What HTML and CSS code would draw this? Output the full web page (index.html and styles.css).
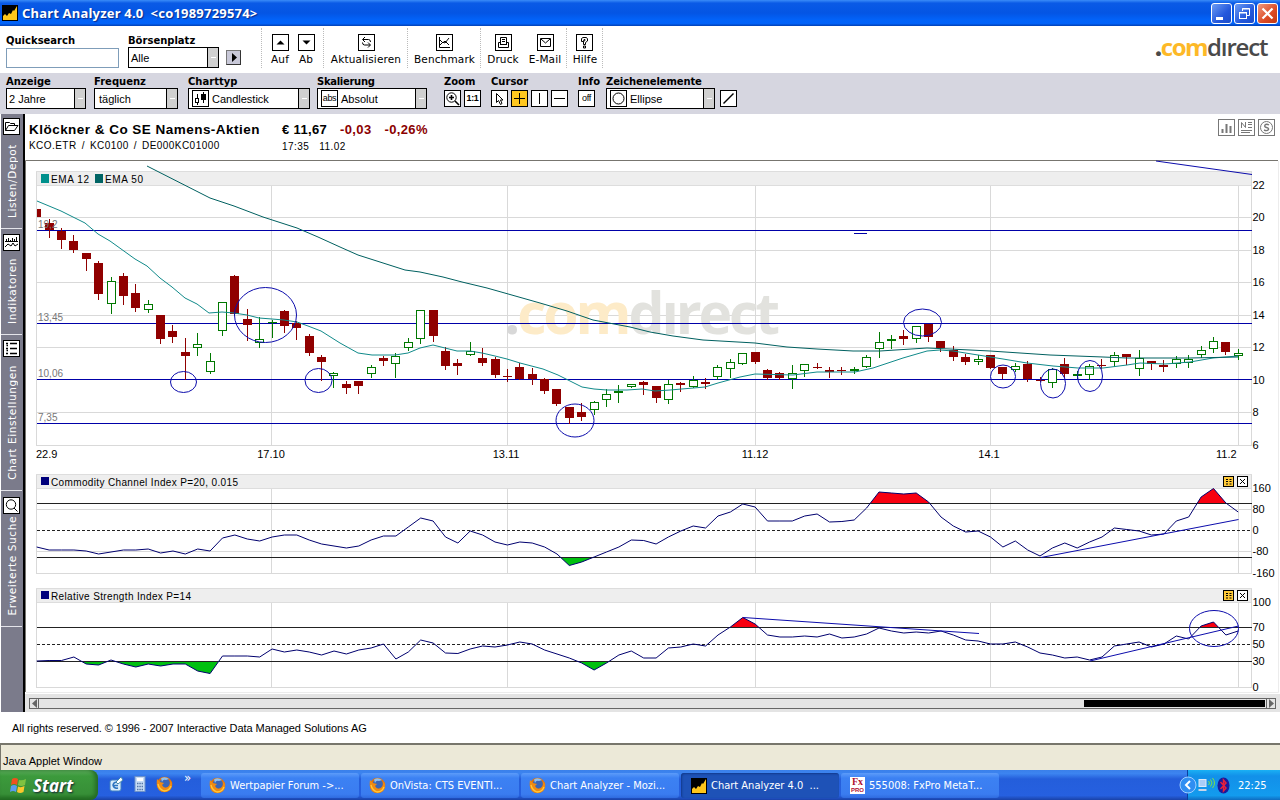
FILE: index.html
```html
<!DOCTYPE html>
<html lang="de">
<head>
    <meta charset="UTF-8">
    <title>Chart Analyzer 4.0</title>
    <link rel="stylesheet" href="styles.css">
</head>
<body>

    <!-- Shared symbols -->
    <svg class="defs" width="0" height="0">
        <symbol id="fox" viewBox="0 0 17 17">
            <circle cx="8.5" cy="8.5" r="7.8" fill="#e0730c"/>
            <circle cx="8.8" cy="7" r="5" fill="#3a66b8"/>
            <path d="M5 2.5Q9 0 13 3L10 4Q7 3 6 6Z" fill="#8fc0ee"/>
            <path d="M1 3L4 6L8 7L6 9Q8 13 12 11Q15 9 14 4Q18 9 14 14Q8 18 3 14Q0 10 1 3Z" fill="#f08a12"/>
            <path d="M2 8Q3 13 8 15Q13 15 15 10" fill="none" stroke="#ffc93c" stroke-width="1.3"/>
        </symbol>
        <symbol id="analyzer" viewBox="0 0 16 16">
            <rect width="16" height="16" fill="#000"/>
            <path d="M1 15V11L3 9L5 11L7 8L9 9L11 5L12 6L15 1V15Z" fill="#ffc61a"/>
        </symbol>
    </svg>

    <!-- Title bar -->
    <div class="titlebar">
        <svg class="app-icon" width="16" height="16"><use href="#analyzer"/></svg>
        <span class="title">Chart Analyzer 4.0  &lt;co1989729574&gt;</span>
        <div class="win-buttons">
            <span class="win"><svg width="19" height="19"><rect x="4" y="13" width="7" height="3" fill="#fff"/></svg></span>
            <span class="win"><svg width="19" height="19" fill="none" stroke="#fff"><path d="M7.500 7V4.500H14.500V11.500H12M7 5H15" /><rect x="4.500" y="8.500" width="7" height="6"/><path d="M4 9H12"/></svg></span>
            <span class="win close"><svg width="19" height="19"><path d="M4.500 4.500L14.500 14.500M14.500 4.500L4.500 14.500" stroke="#fff" stroke-width="2.200"/></svg></span>
        </div>
    </div>

    <!-- Main toolbar -->
    <div class="toolbar">
        <div class="field">
            <label>Quicksearch</label>
            <div class="search"></div>
        </div>
        <div class="field">
            <label>Börsenplatz</label>
            <div class="select exchange"><span>Alle</span><i></i></div>
        </div>
        <div class="go"><svg width="13" height="13"><path d="M5 2V11L10 6.500Z"/></svg></div>
        <div class="group narrow">
            <div class="tool"><svg class="ic" viewBox="1 1 15 15"><path class="f" d="M4.500 10.500H12.500L8.500 6.500Z"/></svg>Auf</div>
            <div class="tool"><svg class="ic" viewBox="1 1 15 15"><path class="f" d="M4.500 6.500H12.500L8.500 10.500Z"/></svg>Ab</div>
        </div>
        <div class="group">
            <div class="tool"><svg class="ic" viewBox="1 1 15 15"><path d="M7 3L4.500 5.500L7 8M5 5.500H10.500Q12.500 5.500 12.500 8M10 8.500L12.500 11L10 13.500M12 11H6.500Q4.500 11 4.500 8.500"/></svg>Aktualisieren</div>
        </div>
        <div class="group">
            <div class="tool"><svg class="ic" viewBox="1 1 15 15"><path d="M3.500 3V13.500H14M4 6L7 9L9 7L13 11M4 11L7 8L9 9L13 4"/></svg>Benchmark</div>
        </div>
        <div class="group wide">
            <div class="tool"><svg class="ic" viewBox="1 1 15 15"><path d="M5.500 10V3.500H11.500V10M7 5.500H10M7 7.500H10M5.500 8.500H3.500V13.500H13.500V8.500H11.500M5 10.500H12"/></svg>Druck</div>
            <div class="tool"><svg class="ic" viewBox="1 1 15 15"><path d="M3.500 4.500H13.500V12.500H3.500ZM4 5L8.500 9L13 5"/></svg>E-Mail</div>
        </div>
        <div class="group">
            <div class="tool"><svg class="ic" viewBox="1 1 15 15"><path d="M5.500 7.500V4.500L7 3.500H10.500L11.500 5V7L9.500 8.500V10.500H7.500V7.500L9 6.500V5.500H8L7.500 7.500ZM7.500 12H9.500V14H7.500Z"/></svg>Hilfe</div>
        </div>
        <div class="group"></div>
        <div class="logo"><b>.</b><em>com</em>dırect</div>
    </div>

    <!-- Chart options -->
    <div class="options">
        <div class="field"><label>Anzeige</label><div class="select w80"><span>2 Jahre</span><i></i></div></div>
        <div class="field"><label>Frequenz</label><div class="select w84 indent"><span>täglich</span><i></i></div></div>
        <div class="field"><label>Charttyp</label><div class="select w122">
            <svg class="ic" viewBox="1 1 15 15"><rect x="3.500" y="8.500" width="3" height="4"/><path d="M5.500 4V8M5.500 12V15M11.500 2V13"/><rect class="f" x="9" y="4" width="5" height="6"/></svg>
            <span>Candlestick</span><i></i></div></div>
        <div class="field"><label class="tight">Skalierung</label><div class="select w110">
            <b class="ic txt">abs</b><span>Absolut</span><i></i></div></div>
        <div class="field"><label>Zoom</label><div class="icons">
            <svg class="ic" viewBox="1 1 15 15"><circle cx="7.500" cy="7.500" r="4.700"/><path d="M11 11L15 15M5 7.500H10M7.500 5V10" stroke-width="1.600"/></svg>
            <b class="ic txt ratio">1:1</b></div></div>
        <div class="field"><label>Cursor</label><div class="icons">
            <svg class="ic" viewBox="1 1 15 15"><path d="M5.500 3.500V12.500L7.500 10.500L9.500 14.500L11 13.500L9.500 10H12Z"/></svg>
            <svg class="ic active" viewBox="1 1 15 15"><path d="M3 8.500H14M8.500 3V14"/></svg>
            <svg class="ic" viewBox="1 1 15 15"><path d="M8.500 3V14"/></svg>
            <svg class="ic" viewBox="1 1 15 15"><path d="M3 8.500H14"/></svg></div></div>
        <div class="field"><label>Info</label><div class="icons"><b class="ic txt">off</b></div></div>
        <div class="field"><label class="draw">Zeichenelemente</label><div class="select w109">
            <svg class="ic" viewBox="1 1 15 15"><circle cx="8.500" cy="8.500" r="5.500"/></svg>
            <span>Ellipse</span><i></i></div></div>
        <div class="field"><label>&nbsp;</label><div class="icons"><svg class="ic" viewBox="1 1 15 15"><path d="M3.500 13.500L13.500 3.500" stroke-width="1.400"/></svg></div></div>
    </div>

    <div class="workspace">
        <!-- Vertical tabs -->
        <div class="sidebar">
            <div class="tab t1"><svg class="ic" viewBox="1 1 15 15"><path d="M2.500 12.500V4.500H6.500L7.500 5.500H11.500V7.500M2.500 12.500L5.500 7.500H15L11.500 12.500Z"/></svg><span>Listen/Depot</span></div>
            <div class="tab t2"><svg class="ic" viewBox="1 1 15 15"><path d="M2 7.500H15M3.500 5V7M5.500 4V7M7.500 6V7M9.500 4V7M11.500 5V7M13.500 3V7M2 13L5 10L8 12L10 9L12 12L15 10"/></svg><span>Indikatoren</span></div>
            <div class="tab t3"><svg class="ic" viewBox="1 1 15 15"><path d="M7 3.500H14M7 8.500H14M7 13.500H14M3 3.500H5M3 8.500H5M3 13.500H5M3.500 5.500H5M3.500 10.500H5" stroke-width="1.300"/></svg><span>Chart Einstellungen</span></div>
            <div class="tab t4"><svg class="ic" viewBox="1 1 15 15"><circle cx="8" cy="7.500" r="4.700"/><path d="M11 11L14.500 14.500"/></svg><span>Erweiterte Suche</span></div>
        </div>

        <div class="content">
            <div class="quote">
                <div class="name">
                    <h1>Klöckner &amp; Co SE Namens-Aktien</h1>
                    <p>KCO.ETR / KC0100 / DE000KC01000</p>
                </div>
                <div class="price">
                    <div><strong>€ 11,67</strong><strong class="neg">-0,03</strong><strong class="neg">-0,26%</strong></div>
                    <p>17:35&nbsp; 11.02</p>
                </div>
                <div class="quote-icons">
                    <svg class="ic gray" viewBox="1 1 15 15"><path d="M4.500 14V10M8.500 14V5M12.500 14V7" stroke-width="2"/></svg>
                    <svg class="ic gray" viewBox="1 1 15 15"><path d="M3.500 9V3.500L7.500 8.500V3M10 3.500H14M10 5.500H14M10 8.500H14M3 11.500H14M3 13.500H12"/></svg>
                    <svg class="ic gray" viewBox="1 1 15 15"><circle cx="8.500" cy="8.500" r="6"/><path d="M11 6Q8.500 4.500 7 6Q6 8 8.500 8.500Q11 9 10.500 10.500Q9 12.500 6 11" stroke-width="1.400"/></svg>
                </div>
            </div>

            <!-- All three panes share one drawing, units are window pixels -->
            <svg class="chart" viewBox="25 160 1255 534" width="1255" height="534">
                <defs>
                    <clipPath id="plot"><rect x="37" y="161" width="1215" height="285"/></clipPath>
                    <clipPath id="cciHigh"><rect x="37" y="480" width="1202" height="23.500"/></clipPath>
                    <clipPath id="cciLow"><rect x="37" y="557.500" width="1202" height="16"/></clipPath>
                    <clipPath id="rsiHigh"><rect x="37" y="600" width="1202" height="27.500"/></clipPath>
                    <clipPath id="rsiLow"><rect x="37" y="661.500" width="1202" height="26"/></clipPath>
                </defs>
                <path class="frame" d="M25.500 692V160.500H1278"/>
                <path class="frame-light" d="M1278.500 161V692.500H26"/>
                <g id="grid" class="grid"></g>
                <text class="watermark" x="504" y="334" textLength="276"><tspan fill="#d8d8d8">.</tspan><tspan fill="#fdebc8">com</tspan><tspan fill="#e2e2de">dırect</tspan></text>
                <g class="level">
                    <path d="M37 230.500H1252M37 323.500H1252M37 379.500H1252M37 423.500H1252M854 233.500H867"/>
                </g>
                <g id="candles" clip-path="url(#plot)"></g>
                <polyline id="ema12" class="ema12"/>
                <polyline id="ema50" class="ema50"/>
                <g class="drawn">
                    <ellipse cx="265.500" cy="315" rx="31" ry="27.500"/>
                    <ellipse cx="183.500" cy="382" rx="13" ry="10.500"/>
                    <ellipse cx="318.500" cy="380.500" rx="13.500" ry="12"/>
                    <ellipse cx="575" cy="420.500" rx="19" ry="16.500"/>
                    <ellipse cx="922.500" cy="322.500" rx="19" ry="13.500"/>
                    <ellipse cx="1003" cy="376.500" rx="12.500" ry="11.500"/>
                    <ellipse cx="1053" cy="383.500" rx="12.500" ry="14.500"/>
                    <ellipse cx="1090" cy="376" rx="12.500" ry="15.500"/>
                    <path d="M1156 161L1252 174.500"/>
                </g>
                <rect x="41" y="174" width="8" height="9" fill="#00908c"/>
                <rect x="95" y="174" width="8" height="9" fill="#006464"/>
                <g class="legend">
                    <text x="51" y="183" textLength="38">EMA 12</text>
                    <text x="105" y="183" textLength="38">EMA 50</text>
                    <text x="51" y="486" textLength="187">Commodity Channel Index P=20, 0.015</text>
                    <text x="51" y="600" textLength="140">Relative Strength Index P=14</text>
                </g>
                <g class="mark">
                    <text x="38" y="228">19,2</text><text x="38" y="321">13,45</text>
                    <text x="38" y="377">10,06</text><text x="38" y="421">7,35</text>
                </g>
                <rect x="41" y="477" width="8" height="8" fill="#00007c"/>
                <rect x="41" y="591" width="8" height="8" fill="#00007c"/>

                <!-- CCI -->
                <polygon id="cciRed" class="over" clip-path="url(#cciHigh)"/>
                <polygon id="cciGreen" class="under" clip-path="url(#cciLow)"/>
                <path class="limit" d="M37 503.500H1252M37 557.500H1252"/>
                <path class="limit dashed" d="M37 530.500H1252"/>
                <polyline id="cci" class="indicator"/>
                <path class="drawn" d="M1041 557.500L1238.500 519.500"/>

                <!-- RSI -->
                <polygon id="rsiRed" class="over" clip-path="url(#rsiHigh)"/>
                <polygon id="rsiGreen" class="under" clip-path="url(#rsiLow)"/>
                <path class="limit" d="M37 627.500H1252M37 661.500H1252"/>
                <path class="limit dashed" d="M37 644.500H1252"/>
                <polyline id="rsi" class="indicator"/>
                <g class="drawn">
                    <path d="M743 617.500L979 633.500M1090 661L1238.500 626"/>
                    <ellipse cx="1214" cy="628.500" rx="24.500" ry="18"/>
                </g>

                <g id="paneButtons"></g>
                <g id="labels" class="axis"></g>
            </svg>

            <div class="scroll">
                <div class="track">
                    <svg width="9" height="9"><path d="M7 0V9L2 4.500Z" fill="#666"/></svg>
                    <div class="thumb"></div>
                    <svg class="right" width="9" height="9"><path d="M2 0V9L7 4.500Z" fill="#666"/></svg>
                </div>
            </div>
        </div>
    </div>

    <div class="copyright">All rights reserved. © 1996 - 2007 Interactive Data Managed Solutions AG</div>
    <div class="status">Java Applet Window</div>

    <!-- Taskbar -->
    <div class="taskbar">
        <div class="start">
            <svg width="19" height="18" viewBox="0 0 19 18"><path d="M3 3Q6 1 9 3L8 9Q5 7 2 9Z" fill="#f0501e"/><path d="M10 4Q13 5 17 3L16 9Q12 11 9 9Z" fill="#7fc241"/><path d="M2 10Q5 8 8 10L7 16Q4 14 1 16Z" fill="#5b9bf0"/><path d="M9 10.500Q12 12 15.500 10L14.500 16Q11 18 8 16Z" fill="#fcc72c"/></svg>
            <span>Start</span>
        </div>
        <div class="quick">
            <svg width="16" height="16" viewBox="0 0 16 16"><rect x="2" y="4" width="11" height="11" rx="2" fill="#d8ecfa" stroke="#3d7ec4"/><path d="M10.500 7Q6 5 5 9Q6 13 10 12M5 9.500H10" stroke="#2c74c0" stroke-width="1.500" fill="none"/><path d="M8 6L13 1L15 4L10 8Z" fill="#fff" stroke="#48a"/></svg>
            <svg width="16" height="16" viewBox="0 0 16 16"><rect x="3" y="0.500" width="10" height="15" fill="#c8ddf6" stroke="#6f93c9"/><rect x="5" y="2" width="6" height="3" fill="#fff"/><path d="M5 7.500H11M5 10.500H11M5 13.500H11" stroke="#5577a8" stroke-width="1.500" stroke-dasharray="1.500 .8"/></svg>
            <svg width="17" height="17"><use href="#fox"/></svg>
            <span class="more">»</span>
        </div>
        <div class="task"><svg width="17" height="17"><use href="#fox"/></svg><span>Wertpapier Forum -&gt;...</span></div>
        <div class="task"><svg width="17" height="17"><use href="#fox"/></svg><span>OnVista: CTS EVENTI...</span></div>
        <div class="task"><svg width="17" height="17"><use href="#fox"/></svg><span>Chart Analyzer - Mozi...</span></div>
        <div class="task pressed"><svg width="16" height="16"><use href="#analyzer"/></svg><span>Chart Analyzer 4.0&nbsp; ...</span></div>
        <div class="task fxpro"><div class="fx"><span>Fx</span><small>PRO</small></div><span>555008: FxPro MetaT...</span></div>
        <div class="tray">
            <svg class="expand" width="18" height="18"><circle cx="9" cy="9" r="8" fill="#2f8ef2" stroke="#9fd0ff"/><path d="M11 5L7 9L11 13" stroke="#fff" stroke-width="2" fill="none"/></svg>
            <svg width="19" height="16" viewBox="0 0 18 16"><rect x="1.500" y="2.500" width="7" height="7" fill="#a9cdf7" stroke="#dce9f8"/><path d="M1 12H9V14H1Z" fill="#c9d6e8"/><path d="M11 4Q13 6 11 8M13 2.500Q16 6 13 9.500M15 1Q19 6 15 11" stroke="#7de04a" fill="none"/></svg>
            <svg class="bt" width="13" height="17" viewBox="0 0 13 17"><ellipse cx="6.500" cy="8.500" rx="6" ry="8" fill="#1a1a9c"/><path d="M3.500 5L9 11L6.500 14V3L9 6L3.500 12" stroke="#e8203a" stroke-width="1.500" fill="none"/></svg>
            <span class="clock">22:25</span>
        </div>
    </div>

    <script src="chart.js"></script>
</body>
</html>
```
FILE: styles.css
```css
* {
    box-sizing: border-box;
}

body {
    margin: 0;
    width: 1280px;
    height: 800px;
    overflow: hidden;
    background: #fff;
    color: #000;
    font-family: "Liberation Sans", Arial, sans-serif;
    font-size: 11px;
}

svg {
    display: block;
    flex: none;
}

.defs {
    position: absolute;
}

/* Title bar */
.titlebar {
    display: flex;
    align-items: center;
    height: 26px;
    padding: 0 2px;
    background: linear-gradient(#3a8cf8 0, #0a5ae6 12%, #0455e4 50%, #0262f8 75%, #0263fa 90%, #0340b4 100%);
}

.title {
    margin-left: 4px;
    color: #fff;
    font: bold 13px "Noto Sans", sans-serif;
    letter-spacing: 0.2px;
    white-space: pre;
    text-shadow: 1px 1px 1px #0a2a88;
}

.win-buttons {
    display: flex;
    gap: 2px;
    margin-left: auto;
}

.win {
    width: 21px;
    height: 21px;
    border: 1px solid #fff;
    border-radius: 3px;
    background: linear-gradient(135deg, #6c9cf4, #2458dc 60%, #1c4cc8);
}

.close {
    background: linear-gradient(135deg, #f09a80, #dc4a24 60%, #c03a14);
}

/* Icon boxes */
.ic {
    display: block;
    flex: none;
    width: 17px;
    height: 17px;
    border: 1px solid #000;
    background: #fff;
    fill: none;
    stroke: #000;
}

.ic .f {
    fill: #000;
    stroke: none;
}

.txt {
    font: 9px/14px "Liberation Sans", sans-serif;
    letter-spacing: -0.3px;
    text-align: center;
}

.ratio {
    font-weight: bold;
}

.active {
    background: #ffc71f;
}

.gray {
    border-color: #777;
    stroke: #777;
}

/* Toolbars */
.toolbar {
    display: grid;
    grid-template-columns: 122px 98px 35px 62px 84px 73px 86px 36px 1px 1fr;
    height: 47px;
    padding-left: 6px;
}

.field label {
    display: block;
    height: 13px;
    font: bold 10px/14px "DejaVu Sans", Verdana, sans-serif;
    white-space: nowrap;
}

.field .tight {
    letter-spacing: -0.300px;
}

.field .draw {
    letter-spacing: -0.100px;
}

.toolbar .field {
    padding-top: 8px;
}

.search {
    width: 113px;
    height: 20px;
    margin-top: 1px;
    border: 1px solid #7f9db9;
}

.select {
    display: flex;
    align-items: center;
    height: 21px;
    padding-left: 2px;
    border: 1px solid #000;
    background: #fff;
    letter-spacing: 0;
}

.select .ic {
    margin: 0 3px 0 1px;
}

.select i {
    align-self: stretch;
    width: 11px;
    margin-left: auto;
    border-left: 1px solid #000;
    background: linear-gradient(#fff, #fff) 3px 9px / 5px 1px no-repeat, #d0d0d0;
}

.exchange {
    width: 91px;
}

.w80 { width: 80px; }
.w84 { width: 84px; }
.w109 { width: 109px; }
.w110 { width: 110px; }
.w122 { width: 122px; }

.indent {
    padding-left: 4px;
}

.go {
    width: 15px;
    height: 15px;
    margin-top: 24px;
    border: 1px solid #777;
    border-right-color: #333;
    border-bottom-color: #333;
    background: #c8c8d8;
}

.group {
    display: flex;
    justify-content: center;
    height: 40px;
    margin-top: 2px;
    padding: 6px 0 0 1px;
    border-left: 1px dotted #bbb;
}

.tool {
    display: flex;
    flex-direction: column;
    align-items: center;
    gap: 2px;
    font: 10.500px/12px "DejaVu Sans", Verdana, sans-serif;
    letter-spacing: 0.15px;
}

.narrow .tool {
    width: 26px;
}

.wide .tool {
    width: 42px;
}

.logo {
    justify-self: end;
    width: 125px;
    padding-top: 4px;
    color: #4a4a4a;
    font: 600 24px/34px "Open Sans", sans-serif;
    letter-spacing: -1.150px;
}

.logo em {
    color: #fdb927;
    font-style: normal;
    font-weight: bold;
    letter-spacing: -1.500px;
}

.options {
    display: grid;
    grid-template-columns: 88px 94px 129px 127px 47px 87px 28px 114px 20px;
    height: 41px;
    padding: 2px 0 0 6px;
    background: #d6d6e0;
}

.icons {
    display: flex;
    gap: 3px;
    padding-top: 2px;
}

/* Workspace */
.workspace {
    display: flex;
    height: 598px;
}

.sidebar {
    width: 25px;
    border-left: 1px solid #fff;
    border-right: 2px solid #000;
    background: #7b7b8b;
}

.tab {
    display: flex;
    flex-direction: column;
    align-items: center;
    justify-content: space-between;
    width: 21px;
    padding: 4px 0 10px;
    border-bottom: 1px solid #e4e4ea;
}

.t1 { height: 115px; }
.t2 { height: 106px; padding-top: 5px; }
.t3 { height: 156px; padding-top: 5px; }
.t4 { height: 136px; padding-top: 6px; }

.tab span {
    writing-mode: vertical-rl;
    transform: rotate(180deg);
    color: #fff;
    font: 10.500px/14px "DejaVu Sans", Verdana, sans-serif;
    letter-spacing: 0.6px;
    white-space: nowrap;
}

.content {
    width: 1255px;
}

.quote {
    display: flex;
    height: 46px;
    padding: 7px 5px 0 4px;
}

.name {
    width: 253px;
    white-space: nowrap;
}

h1 {
    margin: 0;
    font-size: 13.500px;
    line-height: 17px;
    letter-spacing: 0.470px;
}

.quote p {
    margin: 2px 0 0;
    font-size: 10px;
    line-height: 12px;
    letter-spacing: 0.450px;
    word-spacing: 1.800px;
}

.price div {
    line-height: 17px;
}

.price strong {
    margin-right: 13px;
    font-size: 13px;
    letter-spacing: 0.350px;
}

.neg {
    color: #8b0000;
}

.quote-icons {
    display: flex;
    gap: 3px;
    margin: -2px 0 0 auto;
}

/* Chart */
.frame {
    fill: none;
    stroke: #77756f;
}

.frame-light {
    fill: none;
    stroke: #ececec;
}

.grid path {
    fill: none;
    stroke: #d9d9d9;
}

.grid rect {
    fill: #eee;
    stroke: #ddd;
}

.grid, .level, .limit, #candles {
    shape-rendering: crispEdges;
}

.watermark {
    font: bold 57px "Open Sans", sans-serif;
}

.level {
    stroke: #0000a8;
}

.up {
    fill: #fff;
    stroke: #007800;
}

.down {
    fill: #900000;
    stroke: #900000;
}

.ema12, .ema50, .indicator, .drawn {
    fill: none;
}

.ema12 { stroke: #108a8a; }
.ema50 { stroke: #006060; }
.indicator { stroke: #00006e; }
.drawn { stroke: #0c0cac; }

.over { fill: #f80010; }
.under { fill: #00c010; }

.limit {
    stroke: #222;
}

.dashed {
    stroke-dasharray: 3 2;
}

.legend {
    font-size: 10px;
}

.mark {
    fill: #777;
    font-size: 10px;
}

.axis {
    font-size: 11px;
}

/* Scrollbar */
.scroll {
    height: 18px;
    padding: 4px 4px 0;
    background: #e4e4e4;
}

.track {
    display: flex;
    align-items: center;
    height: 11px;
    border: 1px solid #666;
}

.track svg {
    border-right: 1px solid #666;
}

.track .right {
    border-right: 0;
    border-left: 1px solid #666;
}

.thumb {
    width: 181px;
    height: 7px;
    margin: 0 1px 0 auto;
    background: #000;
}

.copyright {
    height: 31px;
    padding-left: 12px;
    line-height: 33px;
    letter-spacing: -0.070px;
}

.status {
    height: 27px;
    padding: 3px 0 0 2px;
    border-top: 2px solid #77766c;
    border-left: 1px solid #77766c;
    background: #ece9d8;
    line-height: 26px;
}

/* Taskbar */
.taskbar {
    display: flex;
    align-items: stretch;
    height: 30px;
    background: linear-gradient(#3a80ea 0, #3c84f0 12%, #245edb 30%, #2660e0 85%, #1a42a8 100%);
    color: #fff;
    font: 11px "DejaVu Sans Condensed", Tahoma, sans-serif;
}

.start {
    display: flex;
    align-items: center;
    gap: 5px;
    width: 98px;
    padding-left: 9px;
    border-radius: 0 8px 8px 0;
    background: linear-gradient(#5fb05f 0, #3c9a3c 20%, #378f37 80%, #1f6a1f 100%);
    box-shadow: inset -3px 0 4px #256a25;
    font: italic bold 17px "Open Sans", sans-serif;
    letter-spacing: 0;
    text-shadow: 1px 1px 2px #123;
}

.quick {
    display: flex;
    align-items: center;
    gap: 8px;
    width: 103px;
    padding: 0 0 2px 10px;
}

.more {
    align-self: flex-start;
    margin-left: 3px;
    font-size: 13px;
}

.task {
    display: flex;
    align-items: center;
    gap: 4px;
    width: 158px;
    height: 25px;
    margin: 3px 2px 0 0;
    padding-left: 8px;
    border-radius: 3px;
    background: linear-gradient(#5c9cfa 0, #3c81f3 20%, #3a7cf0 85%, #2f6ade 100%);
    white-space: nowrap;
}

.pressed {
    padding-left: 10px;
    background: #1e52b7;
    box-shadow: inset 1px 1px 2px #123a8c;
}

.fxpro {
    padding-left: 9px;
}

.fx {
    display: flex;
    flex-direction: column;
    align-items: center;
    width: 15px;
    height: 17px;
    background: #fff;
    color: #b01030;
}

.fx span {
    font: bold 10px/10px "Liberation Serif", serif;
}

.fx small {
    font: bold 6px/7px "Liberation Sans", sans-serif;
}

.tray {
    display: flex;
    align-items: center;
    width: 93px;
    margin-left: auto;
    border-left: 1px solid #0c3f9e;
    background: linear-gradient(#1ab0f4 0, #1290e9 20%, #139bee 85%, #0f6cc0 100%);
}

.expand {
    margin-left: -9px;
}

.bt {
    margin-left: 1px;
}

.clock {
    margin-left: 8px;
}
```
FILE: chart.js
```js
const NS = 'http://www.w3.org/2000/svg';
const X0 = 36.7;
const STEP = 12.387;

// body top, body bottom, high, low, up (1) or down (0)
const candles = [
    [209,217,204,222,0],[223,230,219,237,0],[231,240,228,248,0],[241,250,235,252,0],[253,259,253,270,0],
    [263,294,261,299,0],[281,304,277,313,1],[276,296,273,304,0],[293,308,284,311,0],[304,310,300,312,1],
    [315,339,315,343,0],[331,337,325,342,0],[352,356,338,379,0],[344,348,333,355,1],[361,372,353,373,1],
    [302,331,302,335,1],[276,314,275,315,0],[319,325,309,340,0],[339,343,317,347,1],[322,323,320,337,1],
    [311,326,310,332,0],[323,328,321,339,0],[336,353,334,355,0],[357,362,355,380,0],[373,376,372,387,1],
    [384,388,381,393,0],[381,386,381,393,0],[367,374,365,377,1],[358,361,356,365,0],[356,364,353,377,1],
    [342,348,338,350,1],[310,339,310,343,1],[310,336,310,341,0],[351,366,347,369,0],[363,366,359,374,0],
    [351,355,342,355,1],[358,363,348,365,0],[359,375,357,377,0],[376,377,369,381,0],[367,379,363,379,0],
    [374,379,368,384,0],[379,391,378,393,0],[389,404,389,405,0],[407,418,407,423,0],[412,417,403,420,0],
    [402,410,401,414,1],[394,400,389,406,1],[391,393,385,402,1],[384,387,384,387,1],[382,385,381,394,0],
    [386,398,386,402,0],[384,400,380,403,1],[383,385,382,391,0],[380,387,376,387,1],[382,384,378,388,0],
    [367,377,365,379,1],[362,369,359,377,1],[353,364,353,364,1],[352,362,352,363,0],[370,378,369,379,0],
    [373,378,372,379,0],[373,379,365,388,1],[364,371,364,376,1],[367,368,363,368,0],[370,372,367,377,0],
    [370,371,367,374,0],[369,371,367,373,1],[357,367,355,367,1],[342,349,332,357,1],[339,341,335,348,1],
    [336,339,330,344,0],[326,339,326,342,1],[324,337,324,341,0],[341,348,341,351,0],[350,357,346,360,0],
    [357,362,354,364,0],[359,362,355,364,1],[355,368,355,368,0],[367,374,367,378,0],[366,370,363,371,1],
    [364,379,361,381,0],[380,381,377,381,0],[369,383,368,387,1],[364,374,358,377,0],[374,376,371,378,1],
    [366,375,364,379,1],[365,366,359,368,0],[355,362,352,366,1],[354,357,354,364,0],[358,369,350,375,1],
    [361,364,361,369,0],[365,367,360,371,0],[359,364,356,367,1],[359,363,355,367,1],[350,355,346,357,1],
    [341,349,337,352,1],[342,352,342,354,0],[353,356,349,359,1]
];

const cci = [
    547,550,550,550,551,554,552,550,550,549,553,551,554,549,551,538,535,539,541,537,535,535,540,544,546,
    548,546,540,536,536,527,518,521,537,543,531,535,542,545,542,543,547,554,565.5,562,557,552,547,540,540.5,
    544,537,531,526,528,516,512,504,507,521,521,521,516,514,522,521.5,520,508,492,493,494,493,502,517,526,
    532,531,537,547,541,550,556,548,543,548,542,537,528,529.5,531,535,534,521,517,497,488.5,503,512
];

const rsi = [
    661,660.5,660.5,657,664,665,660,664,667,664,666,664,664,671,673.5,656,656,656,657,649,652,650,652,655,651,
    654,650,648,644,659,652,640,643,653,653.5,649,646,647,645,642,644,650,654,658,663,670,663,655,651,658,
    658,648,647,644,646,635,627,617.5,624,635,637,637,636,637,634,638,637,634,628,631,633,632,633,631,635,
    640,641,644,644,642,647,653,655,658,657,660,657,646,644,642,647,644,636,639,626,622,635,631
];

const ema12 = '37,201 49,206 61,211 85,223 98,234 110,241 135,259 147,266 160,278 172,287 185,298 197,304 209,313 222,312 234,313 247,315 259,318 272,319 284,320 297,322 308,326 321,331 340,343 358,353 372,355 395,355 408,353 420,348 433,345 445,348 457,351 470,351 482,353 495,356 507,359 520,363 543,369 558,375 570,381 582,387 594,389 607,390 627,390 642,389 655,391 670,390 705,387 718,383 740,377 755,374 793,375 817,372 855,372 873,368 903,358 927,351 940,350 953,351 978,355 1003,359 1027,363 1053,366 1078,368 1103,368 1127,365 1140,363 1165,364 1190,362 1213,358 1238,356';
const ema50 = '147,166 210,198 234,206 263,217 297,228 318,237 340,247 358,255 405,270 420,272 443,277 462,282 487,288 540,303 567,311 593,320 630,327 650,332 673,336 703,340 755,343 787,347 817,349 853,351 880,351 927,348 950,349 990,351 1050,355 1103,357 1127,358 1190,358 1238,357';

function add(parent, tag, attrs, text) {
    const el = document.createElementNS(NS, tag);
    for (const key in attrs) el.setAttribute(key, attrs[key]);
    if (text) el.textContent = text;
    document.getElementById(parent).appendChild(el);
}

function set(id, points) {
    document.getElementById(id).setAttribute('points', points);
}

// Grid and pane headers
const ticks = [271.5, 507.5, 755.5, 990.5, 1238.5];
const panes = [
    { head: 171.5, top: 185.5, bottom: 445.5, rows: [217.5, 250.5, 282.5, 315.5, 347.5, 379.5, 412.5] },
    { head: 474.5, top: 488.5, bottom: 573.5, rows: [509.5, 551.5] },
    { head: 588.5, top: 602.5, bottom: 687.5, rows: [] }
];
panes.forEach(p => {
    let d = `M36.5 ${p.head}V${p.bottom}H1251.5V${p.head}`;
    ticks.forEach(x => d += `M${x} ${p.top}V${p.bottom}`);
    p.rows.forEach(y => d += `M37 ${y}H1252`);
    add('grid', 'rect', { x: 36.5, y: p.head, width: 1215, height: p.top - p.head });
    add('grid', 'path', { d });
});

// Candles
candles.forEach(([top, bottom, high, low, up], i) => {
    const x = Math.round(X0 + STEP * i - 0.5) + 0.5;
    const cls = up ? 'up' : 'down';
    add('candles', 'path', { class: cls, d: `M${x} ${high}V${low + 1}` });
    add('candles', 'rect', { class: cls, x: x - 4, y: top + 0.5, width: 8, height: Math.max(bottom - top - 1, 0.01) });
});

// Indicator lines and the areas beyond their limits
const toPoints = values => values.map((y, i) => `${(X0 + STEP * i).toFixed(1)},${y}`).join(' ');
set('ema12', ema12);
set('ema50', ema50);
set('cci', toPoints(cci));
set('rsi', toPoints(rsi));
['cciRed', 'cciGreen'].forEach(id => set(id, `37,530 ${toPoints(cci)} 1238,530`));
['rsiRed', 'rsiGreen'].forEach(id => set(id, `37,644 ${toPoints(rsi)} 1238,644`));

// Axis labels
[[22,189],[20,221],[18,254],[16,286],[14,319],[12,351],[10,384],[8,416],[6,449],
 [160,492],[80,513],['0',534],[-80,555],[-160,577],
 [100,606],[70,631],[50,648],[30,665],['0',691]].forEach(([t, y]) => add('labels', 'text', { x: 1252.5, y }, t));
add('labels', 'text', { x: 36, y: 458 }, '22.9');
add('labels', 'text', { x: 271, y: 458, 'text-anchor': 'middle' }, '17.10');
add('labels', 'text', { x: 506, y: 458, 'text-anchor': 'middle' }, '13.11');
add('labels', 'text', { x: 755, y: 458, 'text-anchor': 'middle' }, '11.12');
add('labels', 'text', { x: 989, y: 458, 'text-anchor': 'middle' }, '14.1');
add('labels', 'text', { x: 1216, y: 458 }, '11.2');

// Settings and close buttons of the indicator panes
[476.5, 590.5].forEach(y => {
    add('paneButtons', 'rect', { x: 1223.5, y, width: 10, height: 10, fill: '#ffc938', stroke: '#000' });
    add('paneButtons', 'path', { d: `M1226 ${y + 3}h2m1.500 0h2m-5.500 2h2m1.500 0h2m-5.500 2.500h2m1.500 0h2`, stroke: '#000' });
    add('paneButtons', 'rect', { x: 1237.5, y, width: 10, height: 10, fill: '#fff', stroke: '#000' });
    add('paneButtons', 'path', { d: `M1240 ${y + 2.5}l5 5m0 -5l-5 5`, stroke: '#000' });
});
```
